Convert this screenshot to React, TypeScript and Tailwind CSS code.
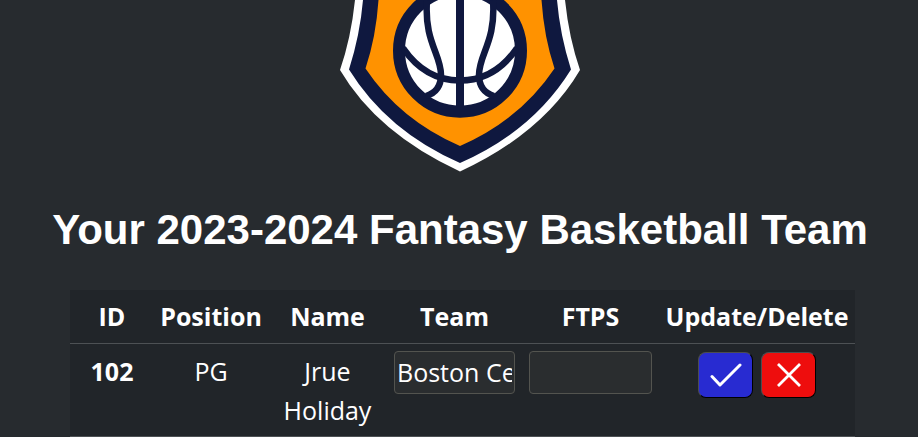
import { useState } from "react";

interface Player {
  id: number;
  position: string;
  name: string;
  team: string;
  points: string;
}

const roster: Player[] = [
  { id: 102, position: "PG", name: "Jrue Holiday", team: "Boston Celtics", points: "" },
];

const columns = [
  { label: "ID", width: "w-[84px]" },
  { label: "Position", width: "w-[114px]" },
  { label: "Name", width: "w-[119px]" },
  { label: "Team", width: "w-[135px]" },
  { label: "FTPS", width: "w-[137px]" },
  { label: "Update/Delete", width: "w-[196px]" },
];

// Lower half of the team crest: shield, ball ring and seams
function Crest() {
  return (
    <svg viewBox="340 0 240 172" className="block h-[172px] w-[240px]" role="img" aria-label="Team crest">
      <path d="M355 0Q351 38 340 70Q377 133 460 171.500Q543 133 580 70Q569 38 565 0Z" fill="#fff" />
      <path d="M363 0Q360 35 349 69.500Q387 131 460 163Q533 131 571 69.500Q560 35 557 0Z" fill="#0f183f" />
      <path d="M378.500 0Q376 37 365.500 68.500Q400 120 460 146Q520 120 554.500 68.500Q544 37 541.500 0Z" fill="#ff9200" />
      <circle cx="460" cy="50.700" r="61" fill="#fff" stroke="#0f183f" strokeWidth="12" />
      <g fill="none" stroke="#0f183f" strokeWidth="6.500">
        <path d="M460 0V110" strokeWidth="8" />
        <path d="M403 48C418 70 438 80.500 460 80.500C482 80.500 502 70 517 48" />
        <path d="M427 0C424 42 441 54 441 75C441 86 436 93 426 96" />
        <path d="M493 0C496 42 479 54 479 75C479 86 484 93 494 96" />
      </g>
    </svg>
  );
}

function PlayerRow({ player }: { player: Player }) {
  const [team, setTeam] = useState(player.team);
  const [points, setPoints] = useState(player.points);
  const field =
    "block h-[43px] w-full rounded border border-[#53544f] bg-[#2a2d2f] px-0.5 pb-0.5 text-white";
  const button =
    "flex h-[46px] w-[55px] items-center justify-center rounded-lg border border-t-[#4c4d50] border-l-[#4c4d50] border-r-black border-b-black";

  return (
    <tr className="border-b border-[#4d5154] align-top">
      <th scope="row" className="pt-2 pb-1.5 font-bold">{player.id}</th>
      <td className="pt-2 pb-1.5">{player.position}</td>
      <td className="px-[7px] pt-2 pb-1.5">{player.name}</td>
      <td className="px-[7px] py-[7px]">
        <input aria-label="Team" className={field} value={team} onChange={(e) => setTeam(e.target.value)} />
      </td>
      <td className="px-[7px] py-[7px]">
        <input aria-label="FTPS" className={field} value={points} onChange={(e) => setPoints(e.target.value)} />
      </td>
      <td className="py-2">
        <div className="flex justify-center gap-2">
          <button type="button" aria-label="Update" className={`${button} bg-[#282bd1]`}>
            <svg viewBox="0 0 32 32" className="size-8" fill="none" stroke="#fff" strokeWidth="3" strokeLinecap="round" strokeLinejoin="round">
              <path d="M2 17.500L10 26L30 6" />
            </svg>
          </button>
          <button type="button" aria-label="Delete" className={`${button} bg-[#ee0d0d]`}>
            <svg viewBox="0 0 32 32" className="size-8" fill="none" stroke="#fff" strokeWidth="2.800">
              <path d="M5 5L27 27M27 5L5 27" />
            </svg>
          </button>
        </div>
      </td>
    </tr>
  );
}

export default function App() {
  return (
    <main className="min-h-screen bg-[#272b2f] pl-0.5 text-white">
      <div className="flex justify-center">
        <Crest />
      </div>
      <h1 className="mt-8 text-center font-['Liberation_Sans',Arial,sans-serif] text-[42px] leading-[52px] font-bold">
        Your 2023-2024 Fantasy Basketball Team
      </h1>
      <div className="mt-[34px] pr-[63px] pl-[68px]">
        <table className="w-full table-fixed border-collapse bg-[#212529] text-center font-['Open_Sans','Noto_Sans',sans-serif] text-[25px] leading-[39px]">
          <thead>
            <tr className="border-b border-[#4d5154]">
              {columns.map((column) => (
                <th key={column.label} scope="col" className={`${column.width} py-[7px] font-bold`}>
                  {column.label}
                </th>
              ))}
            </tr>
          </thead>
          <tbody>
            {roster.map((player) => (
              <PlayerRow key={player.id} player={player} />
            ))}
          </tbody>
        </table>
      </div>
    </main>
  );
}
